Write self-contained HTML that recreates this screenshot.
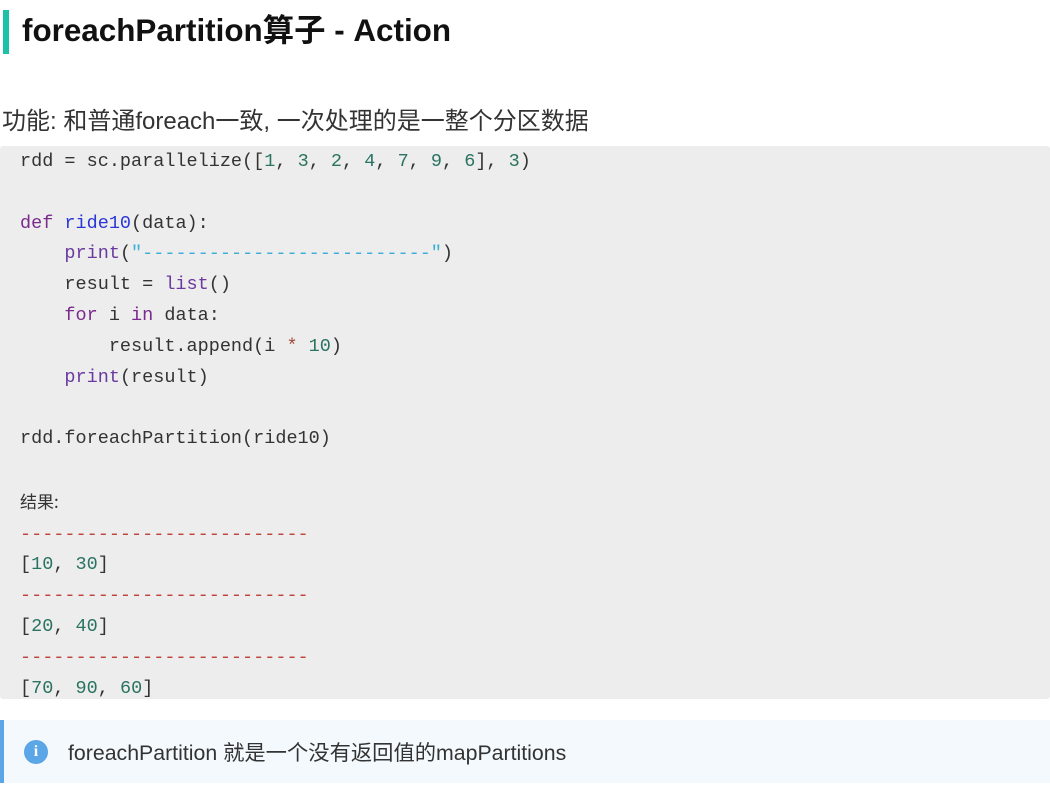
<!DOCTYPE html>
<html><head><meta charset="utf-8"><style>
body{margin:0;width:1050px;height:796px;background:#fff;overflow:hidden;font-family:"Liberation Sans","Noto Sans CJK SC",sans-serif;color:#222}
.bar{position:absolute;left:3px;top:10px;width:6px;height:44px;background:#1bc2a8}
h1{position:absolute;left:22px;top:9px;margin:0;font-size:31.4px;font-weight:bold;letter-spacing:0;color:#111;line-height:44px}
.sub{position:absolute;left:2px;top:106px;font-size:24px;color:#333;line-height:32px;letter-spacing:0}
.code{position:absolute;left:0;top:146px;width:1050px;height:553px;background:#ededed;border-radius:3px}
pre{margin:0;position:absolute;left:20px;top:1px;font-family:"Liberation Mono","DejaVu Sans Mono","Noto Sans CJK SC",monospace;font-size:18.5px;line-height:30.8px;color:#333}
.k{color:#7a2a8c}.d{color:#2a36d8}.b{color:#6a3aa0}.s{color:#3aaed6}.n{color:#2a7360}.o{color:#a14a3a}.r{color:#c0423c}
.cn{font-family:"Noto Sans CJK SC",sans-serif;font-size:17px}
.info{position:absolute;left:0;top:720px;width:1050px;height:63px;background:#f3f9fd;border-left:4px solid #5aa6e6;box-sizing:border-box}
.icon{position:absolute;left:20px;top:20px;width:24px;height:24px;border-radius:50%;background:#5aa6e6;color:#fff;font:bold 16px "Liberation Serif",serif;text-align:center;line-height:24px}
.it{position:absolute;left:64px;top:19px;font-size:21.3px;color:#333;line-height:28px}
</style></head><body>
<div class="bar"></div>
<h1>foreachPartition算子 - Action</h1>
<div class="sub">功能: 和普通foreach一致, 一次处理的是一整个分区数据</div>
<div class="code"><pre>rdd = sc.parallelize([<span class="n">1</span>, <span class="n">3</span>, <span class="n">2</span>, <span class="n">4</span>, <span class="n">7</span>, <span class="n">9</span>, <span class="n">6</span>], <span class="n">3</span>)

<span class="k">def</span> <span class="d">ride10</span>(data):
    <span class="b">print</span>(<span class="s">"--------------------------"</span>)
    result = <span class="b">list</span>()
    <span class="k">for</span> i <span class="k">in</span> data:
        result.append(i <span class="o">*</span> <span class="n">10</span>)
    <span class="b">print</span>(result)

rdd.foreachPartition(ride10)

<span class="cn">结果:</span>
<span class="r">--------------------------</span>
[<span class="n">10</span>, <span class="n">30</span>]
<span class="r">--------------------------</span>
[<span class="n">20</span>, <span class="n">40</span>]
<span class="r">--------------------------</span>
[<span class="n">70</span>, <span class="n">90</span>, <span class="n">60</span>]</pre></div>
<div class="info"><div class="icon">i</div><div class="it">foreachPartition 就是一个没有返回值的mapPartitions</div></div>
</body></html>
